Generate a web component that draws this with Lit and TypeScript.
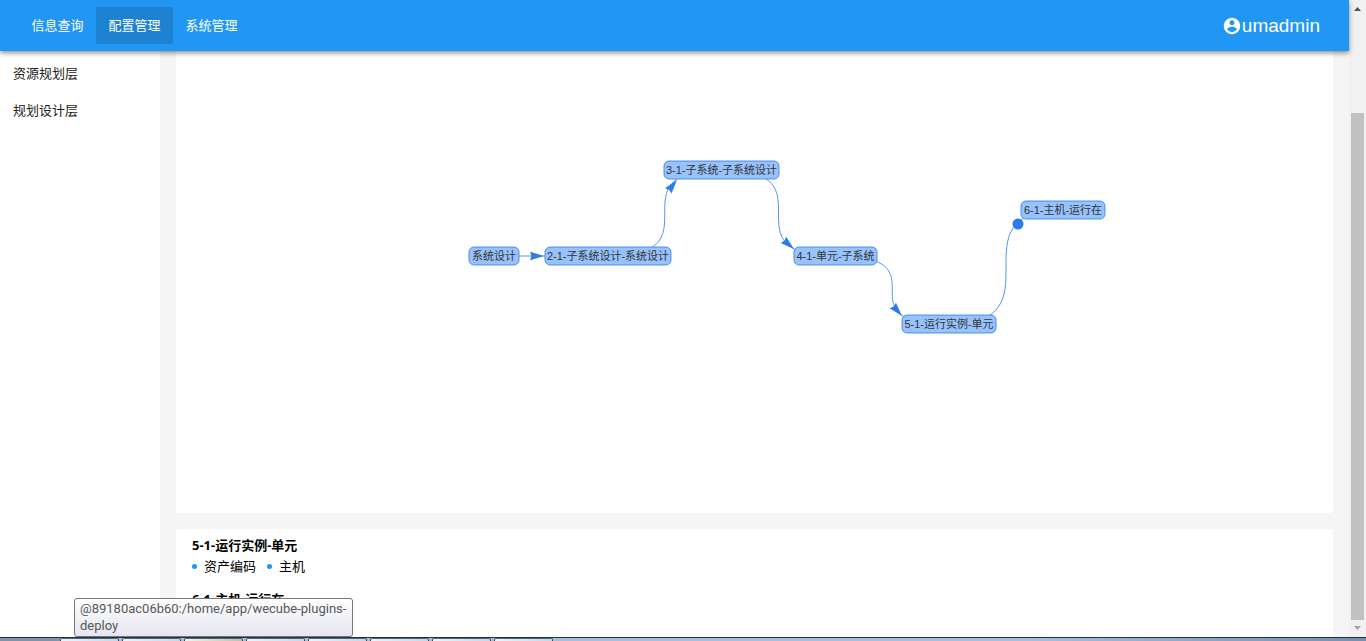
import { LitElement, html, svg, css } from "lit";
import { customElement, state } from "lit/decorators.js";

interface GraphNode {
  id: string;
  label: string;
  x: number;
  y: number;
  width: number;
}

interface AttributeGroup {
  title: string;
  attributes: string[];
}

const NODE_HEIGHT = 18;

const NODES: GraphNode[] = [
  { id: "system", label: "系统设计", x: 293, y: 196, width: 50 },
  { id: "subdesign", label: "2-1-子系统设计-系统设计", x: 369, y: 196, width: 126 },
  { id: "subsystem", label: "3-1-子系统-子系统设计", x: 488, y: 110, width: 115 },
  { id: "unit", label: "4-1-单元-子系统", x: 618, y: 196, width: 83 },
  { id: "instance", label: "5-1-运行实例-单元", x: 726, y: 264, width: 94 },
  { id: "host", label: "6-1-主机-运行在", x: 845, y: 150, width: 84 },
];

const ARROWS = [
  { x: 368, y: 205, angle: 0 },
  { x: 501, y: 129, angle: -51 },
  { x: 618, y: 198, angle: 41 },
  { x: 726, y: 265, angle: 49 },
];

const GROUPS: AttributeGroup[] = [
  { title: "5-1-运行实例-单元", attributes: ["资产编码", "主机"] },
  { title: "6-1-主机-运行在", attributes: [] },
];

@customElement("top-bar")
class TopBar extends LitElement {
  @state() active = "配置管理";

  static styles = css`
    :host {
      display: flex;
      align-items: center;
      justify-content: space-between;
      height: 51px;
      padding: 0 29px 0 19px;
      box-sizing: border-box;
      background: #2196f3;
      box-shadow: 0 2px 5px rgba(0, 0, 0, 0.45);
      color: #fff;
      position: relative;
      z-index: 1;
    }
    .tabs {
      display: flex;
    }
    .tab {
      width: 77px;
      height: 37px;
      padding: 0;
      border: 0;
      background: none;
      color: inherit;
      font: inherit;
      cursor: pointer;
    }
    .active {
      background: #1e82d2;
    }
    .user {
      display: flex;
      align-items: center;
      gap: 1px;
      color: inherit;
      text-decoration: none;
      font: 19px/24px "Liberation Sans", Arial, sans-serif;
    }
    .avatar {
      width: 18px;
      height: 18px;
    }
  `;

  render() {
    return html`
      <nav class="tabs">
        ${["信息查询", "配置管理", "系统管理"].map(
          (name) => html`<button
            class="tab ${name === this.active ? "active" : ""}"
            @click=${() => (this.active = name)}
          >${name}</button>`
        )}
      </nav>
      <a class="user" href="#">
        <svg class="avatar" viewBox="1 1 22 22" aria-hidden="true">
          <path
            fill="#fff"
            d="M12 2C6.48 2 2 6.48 2 12s4.48 10 10 10 10-4.48 10-10S17.52 2 12 2zm0 3c1.66 0 3 1.34 3 3s-1.34 3-3 3-3-1.34-3-3 1.34-3 3-3zm0 14.2c-2.5 0-4.71-1.28-6-3.22.03-1.99 4-3.08 6-3.08s5.97 1.09 6 3.08c-1.29 1.94-3.5 3.22-6 3.22z"
          />
        </svg>
        <span>umadmin</span>
      </a>
    `;
  }
}

@customElement("layer-graph")
class LayerGraph extends LitElement {
  static styles = css`
    :host {
      display: block;
      height: 462px;
      flex: none;
      background: #fff;
      border-radius: 0 0 3px 3px;
    }
    .canvas {
      display: block;
      width: 100%;
      height: 100%;
    }
    .edge {
      fill: none;
      stroke: #2b7ce9;
      stroke-width: 0.8;
    }
    .head {
      fill: #2b7ce9;
    }
    .box {
      fill: #97c2fc;
      stroke: #2b7ce9;
      stroke-width: 0.8;
    }
    .label {
      fill: #343434;
      font: 11px "Liberation Sans", Arial, "Noto Sans CJK SC", sans-serif;
      text-anchor: middle;
    }
  `;

  private edge(from: GraphNode, to: GraphNode) {
    const x1 = from.x + from.width / 2;
    const y1 = from.y + NODE_HEIGHT / 2;
    const x2 = to.x + to.width / 2;
    const y2 = to.y + NODE_HEIGHT / 2;
    return svg`<path class="edge" d="M${x1} ${y1}C${x2} ${y1} ${x1} ${y2} ${x2} ${y2}" />`;
  }

  render() {
    return html`
      <svg class="canvas" role="img" aria-label="规划设计层">
        ${NODES.slice(1).map((node, i) => this.edge(NODES[i], node))}
        ${NODES.map(
          (n) => svg`
            <rect class="box" x=${n.x} y=${n.y} width=${n.width} height=${NODE_HEIGHT} rx="5" />
            <text class="label" x=${n.x + n.width / 2} y=${n.y + 13}>${n.label}</text>`
        )}
        ${ARROWS.map(
          (a) => svg`<path class="head" d="M0 0L-14 4.2L-12.6 0L-14 -4.2Z"
            transform="translate(${a.x} ${a.y}) rotate(${a.angle})" />`
        )}
        <circle class="head" cx="842" cy="173" r="5.5" />
      </svg>
    `;
  }
}

@customElement("attribute-panel")
class AttributePanel extends LitElement {
  static styles = css`
    :host {
      display: block;
      flex: 1 0 auto;
      padding: 6px 16px;
      background: #fff;
      border-radius: 3px 3px 0 0;
      color: #000;
      line-height: 21px;
    }
    .group {
      margin-bottom: 12px;
    }
    .title {
      margin: 0;
      font-size: 13px;
      font-weight: 700;
    }
    .list {
      display: flex;
      gap: 11px;
      margin: 0;
      padding: 0;
      list-style: none;
    }
    .item {
      display: flex;
      align-items: center;
      gap: 7px;
    }
    .item::before {
      content: "";
      width: 5px;
      height: 5px;
      border-radius: 50%;
      background: #2196f3;
    }
  `;

  render() {
    return GROUPS.map(
      (g) => html`<section class="group">
        <h3 class="title">${g.title}</h3>
        <ul class="list">
          ${g.attributes.map((a) => html`<li class="item">${a}</li>`)}
        </ul>
      </section>`
    );
  }
}

@customElement("app-root")
class AppRoot extends LitElement {
  static styles = css`
    :host {
      display: flex;
      flex-direction: column;
      height: 100vh;
      overflow: hidden;
      position: relative;
      background: #f5f5f5;
      font: 13px/21px "Noto Sans", "Noto Sans CJK SC", sans-serif;
    }
    .window {
      display: flex;
      flex: 1;
      min-height: 0;
    }
    .page {
      display: flex;
      flex-direction: column;
      flex: 1;
      min-width: 0;
    }
    .body {
      display: flex;
      flex: 1;
      min-height: 0;
    }
    .side {
      width: 160px;
      padding: 4px 0;
      box-sizing: border-box;
      background: #fff;
    }
    .link {
      display: block;
      padding: 8px 13px;
      color: #212121;
      text-decoration: none;
    }
    .content {
      display: flex;
      flex-direction: column;
      gap: 16px;
      flex: 1;
      min-width: 0;
      padding: 0 16px;
      overflow: hidden;
    }
    .scroll {
      display: flex;
      flex-direction: column;
      align-items: center;
      width: 17px;
      background: #f1f1f1;
    }
    .arrow {
      width: 17px;
      height: 17px;
    }
    .track {
      display: grid;
      grid-template-rows: 96fr 507fr;
      flex: 1;
      width: 13px;
    }
    .thumb {
      grid-row: 2;
      background: #c1c1c1;
    }
    .taskbar {
      display: flex;
      gap: 3px;
      height: 4px;
      padding-left: 60px;
      box-sizing: border-box;
      border-top: 1px solid #23303c;
      background: linear-gradient(90deg, #7f95ae 0 60px, #a6c0de 60px 75%, #7890ae);
    }
    .task {
      width: 59px;
      box-sizing: border-box;
      border: 1px solid #34495e;
      border-top-color: #51657a;
      border-bottom: 0;
      border-radius: 2px 2px 0 0;
      background: linear-gradient(90deg, #eef3fa, #c3d6ee);
    }
    .current {
      background: linear-gradient(90deg, #f4f3e4, #b9c2ab);
    }
    .tooltip {
      position: absolute;
      left: 74px;
      bottom: 4px;
      width: 279px;
      box-sizing: border-box;
      padding: 1px 0 2px 5px;
      border: 1px solid #767676;
      border-radius: 3px;
      background: linear-gradient(#fff, #e4e5f0);
      color: #575757;
      font-family: Roboto, sans-serif;
      line-height: 17px;
      z-index: 2;
    }
  `;

  render() {
    return html`
      <div class="window">
        <div class="page">
          <top-bar></top-bar>
          <div class="body">
            <nav class="side">
              <a class="link" href="#">资源规划层</a>
              <a class="link" href="#">规划设计层</a>
            </nav>
            <main class="content">
              <layer-graph></layer-graph>
              <attribute-panel></attribute-panel>
            </main>
          </div>
        </div>
        <div class="scroll" aria-hidden="true">
          <svg class="arrow" viewBox="0 0 17 17"><path fill="#505050" d="M5 11L8.500 7L12 11Z" /></svg>
          <div class="track"><div class="thumb"></div></div>
          <svg class="arrow" viewBox="0 0 17 17"><path fill="#a3a3a3" d="M5 6L8.500 10L12 6Z" /></svg>
        </div>
      </div>
      <div class="taskbar">
        ${Array.from({ length: 8 }, (_, i) => html`<div class="task ${i === 2 ? "current" : ""}"></div>`)}
      </div>
      <div class="tooltip" role="tooltip">@89180ac06b60:/home/app/wecube-plugins-deploy</div>
    `;
  }
}
